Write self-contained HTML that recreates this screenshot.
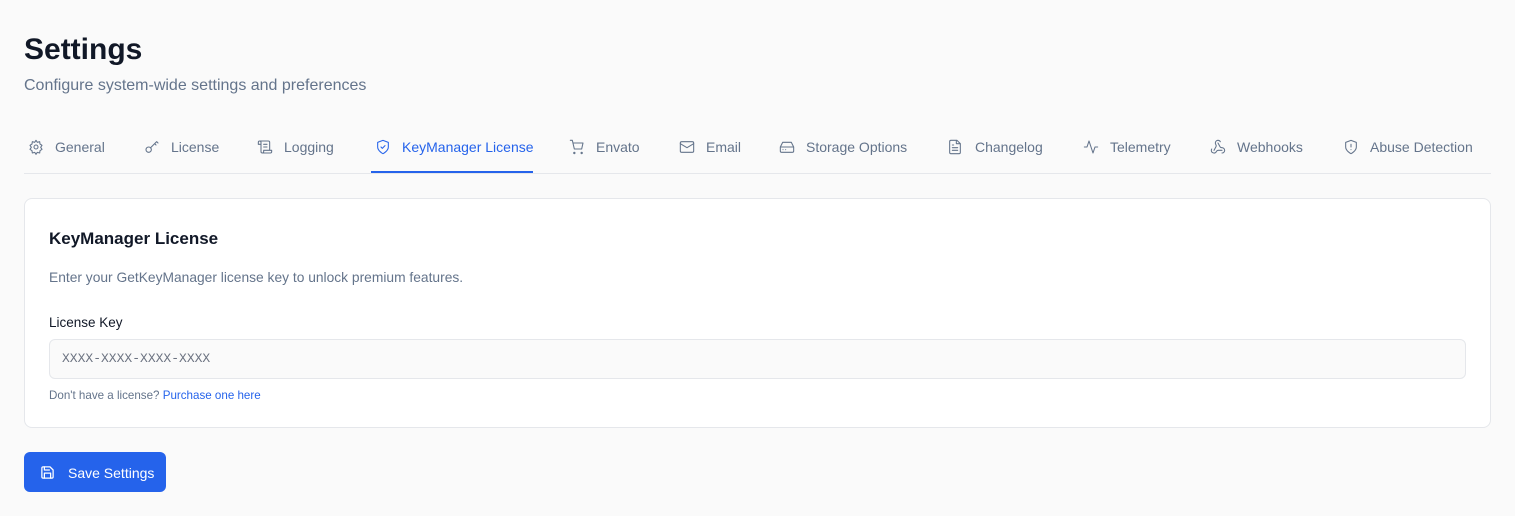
<!DOCTYPE html>
<html><head><style>
*{box-sizing:border-box;margin:0;padding:0}
body{width:1515px;height:516px;background:#fafafa;font-family:"Liberation Sans",sans-serif;position:relative;overflow:hidden;color:#111827}
.a{position:absolute;white-space:nowrap}
h1{position:absolute;left:24px;top:33px;font-size:30px;font-weight:700;color:#111827}
.sub{left:24px;top:77px;font-size:16px;color:#64748b}
.tab{top:139px;font-size:14px;color:#64748b}
.ic{position:absolute;top:139px;width:16px;height:16px}
.ic svg{width:16px;height:16px;fill:none;stroke:#64748b;stroke-width:1.6;stroke-linecap:round;stroke-linejoin:round}
.line{left:24px;top:173px;width:1467px;height:1px;background:#e5e7eb}
.ul{left:371px;top:171px;width:162px;height:2px;background:#2563eb}
.card{left:24px;top:198px;width:1467px;height:230px;background:#fff;border:1px solid #e5e7eb;border-radius:8px}
.inp{left:49px;top:339px;width:1417px;height:40px;border:1px solid #e5e7eb;border-radius:6px;background:#fafafa;font-family:"Liberation Mono",monospace;font-size:13px;color:#6b7280;padding:11px 12px}
.btn{left:24px;top:452px;width:142px;height:40px;background:#2563eb;border-radius:6px;color:#fff;font-size:14px;padding:13px 0 0 44px}
</style></head><body>
<h1>Settings</h1>
<div class="a sub">Configure system-wide settings and preferences</div>

<div class="ic" style="left:28px"><svg viewBox="0 0 24 24"><circle cx="12" cy="12" r="3"/><path d="M12 2l2 3 3.5-1 .5 3.5 3 2-2 3 2 3-3 2-.5 3.5-3.5-1-2 3-2-3-3.5 1-.5-3.5-3-2 2-3-2-3 3-2 .5-3.5 3.5 1z"/></svg></div>
<div class="a tab" style="left:55px">General</div>
<div class="ic" style="left:144px"><svg viewBox="0 0 24 24"><circle cx="7" cy="16" r="4"/><path d="M10 13l9-9M16 7l2 2M19 4l2 2"/></svg></div>
<div class="a tab" style="left:171px">License</div>
<div class="ic" style="left:257px"><svg viewBox="0 0 24 24"><path d="M8 21h12a2 2 0 0 0 2-2v-2H10v2a2 2 0 1 1-4 0V5a2 2 0 1 0-4 0v3h4M19 17V5a2 2 0 0 0-2-2H4M15 8h-5M15 12h-5"/></svg></div>
<div class="a tab" style="left:284px">Logging</div>
<div class="ic" style="left:375px"><svg viewBox="0 0 24 24" style="stroke:#2563eb"><path d="M12 22s8-4 8-10V5l-8-3-8 3v7c0 6 8 10 8 10z"/><path d="M9 12l2 2 4-4"/></svg></div>
<div class="a tab" style="left:402px;color:#2563eb">KeyManager License</div>
<div class="ic" style="left:569px"><svg viewBox="0 0 24 24"><circle cx="8" cy="21" r="1"/><circle cx="19" cy="21" r="1"/><path d="M2 2h3l3 13h11l2-9H6"/></svg></div>
<div class="a tab" style="left:596px">Envato</div>
<div class="ic" style="left:679px"><svg viewBox="0 0 24 24"><rect x="2" y="4" width="20" height="16" rx="2"/><path d="M22 7l-10 6L2 7"/></svg></div>
<div class="a tab" style="left:706px">Email</div>
<div class="ic" style="left:779px"><svg viewBox="0 0 24 24"><path d="M22 12H2M5.5 5h13L22 12v6a2 2 0 0 1-2 2H4a2 2 0 0 1-2-2v-6zM6 16h.01M10 16h.01"/></svg></div>
<div class="a tab" style="left:806px">Storage Options</div>
<div class="ic" style="left:947px"><svg viewBox="0 0 24 24"><path d="M15 2H6a2 2 0 0 0-2 2v16a2 2 0 0 0 2 2h12a2 2 0 0 0 2-2V7zM14 2v5h5M16 13H8M16 17H8M10 9H8"/></svg></div>
<div class="a tab" style="left:975px">Changelog</div>
<div class="ic" style="left:1083px"><svg viewBox="0 0 24 24"><path d="M22 12h-4l-3 9L9 3l-3 9H2"/></svg></div>
<div class="a tab" style="left:1110px">Telemetry</div>
<div class="ic" style="left:1210px"><svg viewBox="0 0 24 24"><path d="M18 16.98h-5.99c-1.1 0-1.950.94-2.48 1.9A4 4 0 0 1 2 17c.01-.7.2-1.4.57-2M6 17l3.130-5.78c.53-.97.1-2.18-.5-3.1a4 4 0 1 1 6.89-4.06M12 6l3.13 5.73C15.66 12.7 16.9 13 18 13a4 4 0 0 1 0 8"/></svg></div>
<div class="a tab" style="left:1237px">Webhooks</div>
<div class="ic" style="left:1343px"><svg viewBox="0 0 24 24"><path d="M12 22s8-4 8-10V5l-8-3-8 3v7c0 6 8 10 8 10z"/><path d="M12 8v4M12 16h.01"/></svg></div>
<div class="a tab" style="left:1370px">Abuse Detection</div>
<div class="a line"></div>
<div class="a ul"></div>

<div class="a card"></div>
<div class="a" style="left:49px;top:229px;font-size:17px;font-weight:700">KeyManager License</div>
<div class="a" style="left:49px;top:270px;font-size:13.8px;color:#64748b">Enter your GetKeyManager license key to unlock premium features.</div>
<div class="a" style="left:49px;top:315px;font-size:13.5px;color:#111827">License Key</div>
<div class="a inp">XXXX-XXXX-XXXX-XXXX</div>
<div class="a" style="left:49px;top:389px;font-size:11.6px;color:#64748b">Don't have a license? <span style="color:#2563eb">Purchase one here</span></div>

<div class="a btn">Save Settings</div>
<svg class="a" style="left:40px;top:465px" width="15" height="15" viewBox="0 0 24 24" fill="none" stroke="#fff" stroke-width="2" stroke-linecap="round" stroke-linejoin="round"><path d="M19 21H5a2 2 0 0 1-2-2V5a2 2 0 0 1 2-2h11l5 5v11a2 2 0 0 1-2 2z"/><path d="M17 21v-8H7v8M7 3v5h8"/></svg>
</body></html>
